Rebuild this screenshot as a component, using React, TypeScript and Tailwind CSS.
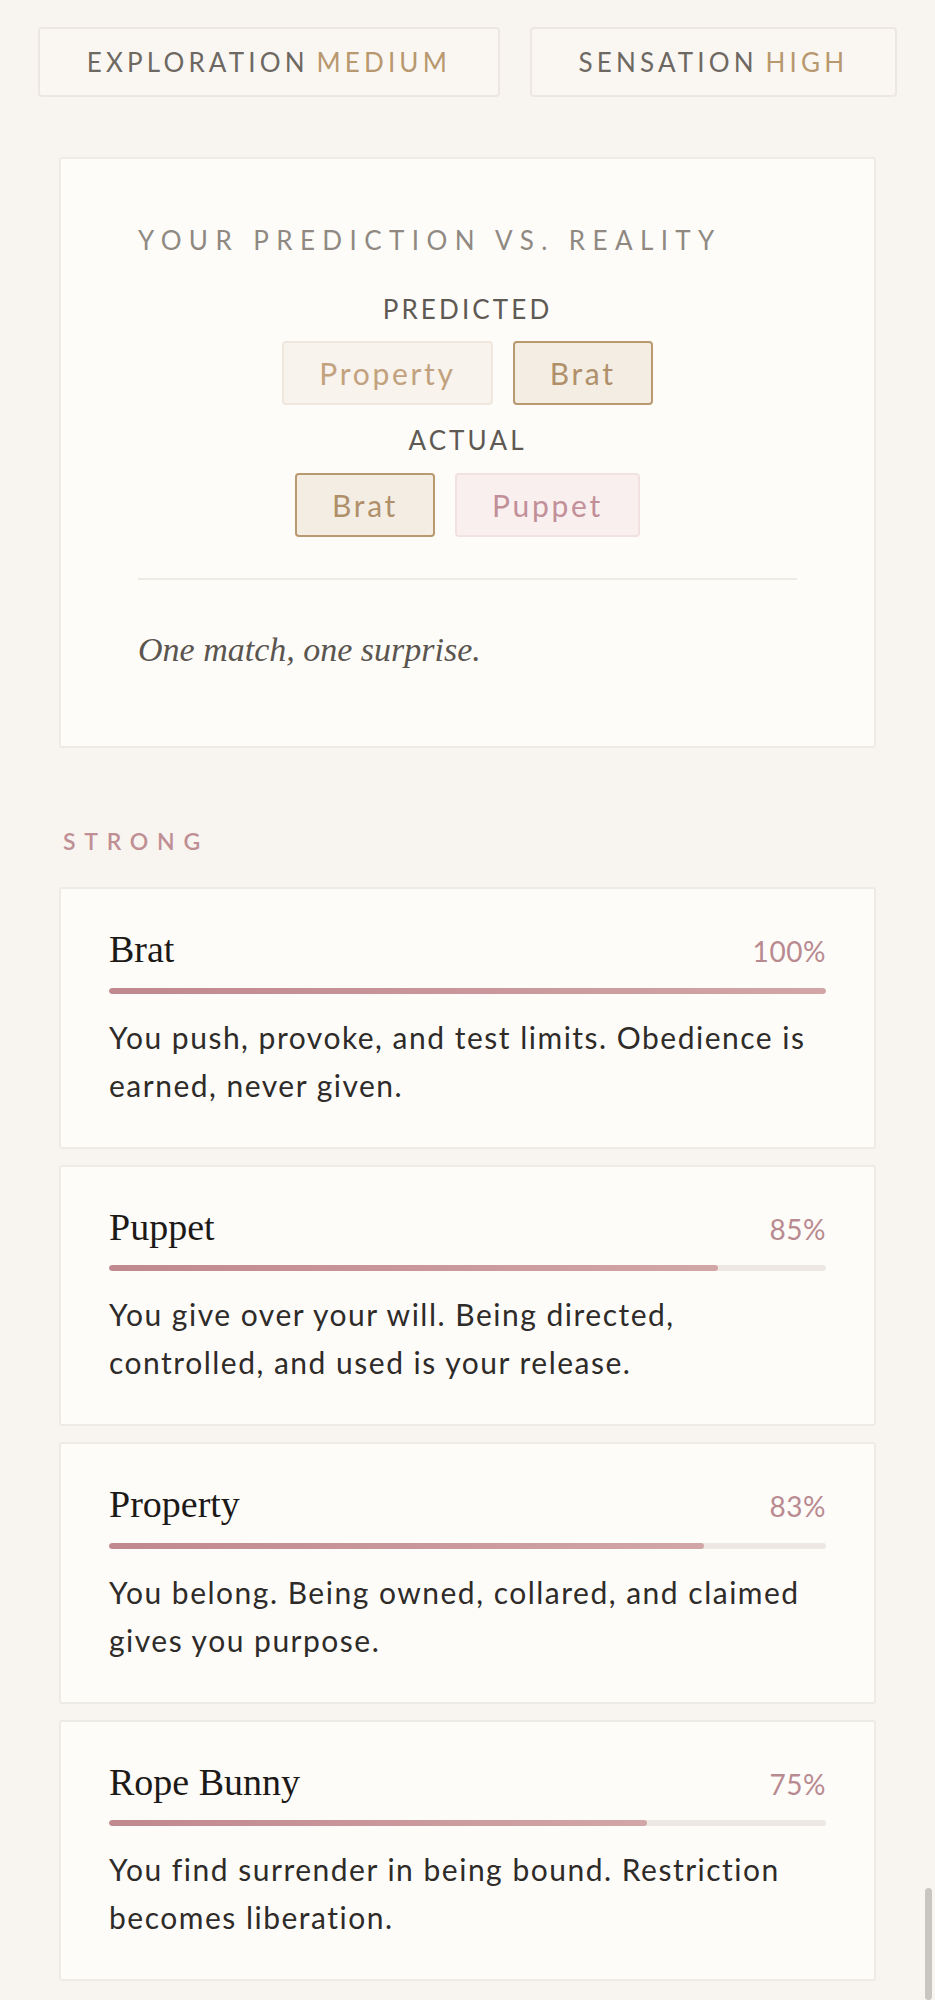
import React from 'react';

interface Strength {
  name: string;
  pct: number;
  desc: string;
}

const strengths: Strength[] = [
  { name: 'Brat', pct: 100, desc: 'You push, provoke, and test limits. Obedience is earned, never given.' },
  { name: 'Puppet', pct: 85, desc: 'You give over your will. Being directed, controlled, and used is your release.' },
  { name: 'Property', pct: 83, desc: 'You belong. Being owned, collared, and claimed gives you purpose.' },
  { name: 'Rope Bunny', pct: 75, desc: 'You find surrender in being bound. Restriction becomes liberation.' },
];

const sans = "font-['Lato','Open_Sans',sans-serif]";
const serif = "font-['Liberation_Serif','DejaVu_Serif',serif]";

type ChipTone = 'match' | 'miss' | 'surprise';

const chipTone: Record<ChipTone, string> = {
  match: 'bg-[#f3ede4] border-[#b9996f] text-[#b0906a]',
  miss: 'bg-[#f8f3ed] border-[#efe7de] text-[#c2a27e]',
  surprise: 'bg-[#f9efef] border-[#f1e1e1] text-[#c28f99]',
};

const Chip: React.FC<{ label: string; tone: ChipTone }> = ({ label, tone }) => (
  <div
    className={`h-[64px] px-[35px] flex items-center justify-center rounded-[4px] border-2 text-[30px] leading-none tracking-[0.09em] ${sans} ${chipTone[tone]}`}
  >
    {label}
  </div>
);

const Meter: React.FC<{ label: string; value: string }> = ({ label, value }) => (
  <div
    className={`flex-auto h-[70px] flex items-center justify-center rounded-[4px] border-2 border-[#ece7e1] bg-[#faf7f3] text-[26px] leading-none tracking-[0.16em] ${sans}`}
  >
    <span className="text-[#6e6862]">{label}</span>
    <span className="ml-[0.3em] text-[#b8986e]">{value}</span>
  </div>
);

const StrengthCard: React.FC<{ item: Strength }> = ({ item }) => (
  <div className="border-2 border-[#eeeae5] bg-[#fdfcf9] rounded-[3px] px-[48px] pt-[38px] pb-[38px]">
    <div className="flex items-baseline justify-between">
      <h3 className={`${serif} text-[38px] leading-[1.2] text-[#1c1917]`}>{item.name}</h3>
      <span className={`${sans} text-[28px] leading-[1.2] text-[#b98a90] tracking-[0.02em]`}>{item.pct}%</span>
    </div>
    <div className="mt-[15px] h-[6px] rounded-full bg-[#ede8e3] overflow-hidden">
      <div
        className="h-full rounded-full bg-gradient-to-r from-[#c0888f] to-[#d2a6a7]"
        style={{ width: `${item.pct}%` }}
      />
    </div>
    <p className={`${sans} mt-[19px] text-[30px] leading-[48px] tracking-[0.05em] text-[#2e2b29]`}>{item.desc}</p>
  </div>
);

export default function App() {
  return (
    <div className="min-h-screen bg-[#f8f5f1] px-[38px] pt-[27px] pb-[60px]">
      <div className="flex gap-[30px]">
        <Meter label="EXPLORATION" value="MEDIUM" />
        <Meter label="SENSATION" value="HIGH" />
      </div>

      <div className="mx-[21px]">
        <section className="mt-[60px] border-2 border-[#eeeae5] bg-[#fdfcf9] rounded-[3px] px-[77px] pt-[66px] pb-[76px]">
          <p className={`${sans} text-[26px] leading-[1.2] tracking-[0.285em] text-[#8f8982]`}>
            YOUR PREDICTION VS. REALITY
          </p>

          <div className="mt-[38px] flex flex-col items-center">
            <p className={`${sans} text-[26px] leading-[1.2] tracking-[0.12em] text-[#5e5953]`}>PREDICTED</p>
            <div className="mt-[16px] flex gap-[20px]">
              <Chip label="Property" tone="miss" />
              <Chip label="Brat" tone="match" />
            </div>
            <p className={`${sans} mt-[20px] text-[26px] leading-[1.2] tracking-[0.12em] text-[#5e5953]`}>ACTUAL</p>
            <div className="mt-[16px] flex gap-[20px]">
              <Chip label="Brat" tone="match" />
              <Chip label="Puppet" tone="surprise" />
            </div>
          </div>

          <div className="mt-[41px] h-[2px] bg-[#eeeae5]" />

          <p className={`${serif} italic mt-[50px] text-[34px] leading-[1.2] text-[#5b554f]`}>One match, one surprise.</p>
        </section>

        <h2 className={`${sans} mt-[80px] pl-[4px] text-[23px] font-semibold leading-[1.2] tracking-[0.38em] text-[#bf8f94]`}>
          STRONG
        </h2>

        <div className="mt-[31px] flex flex-col gap-[16px]">
          {strengths.map((s) => (
            <StrengthCard key={s.name} item={s} />
          ))}
        </div>
      </div>

      {/* overlay scrollbar thumb visible in the capture */}
      <div className="fixed right-[3px] top-[1888px] h-[112px] w-[7px] rounded-full bg-[#c9c5c1]" />
    </div>
  );
}
